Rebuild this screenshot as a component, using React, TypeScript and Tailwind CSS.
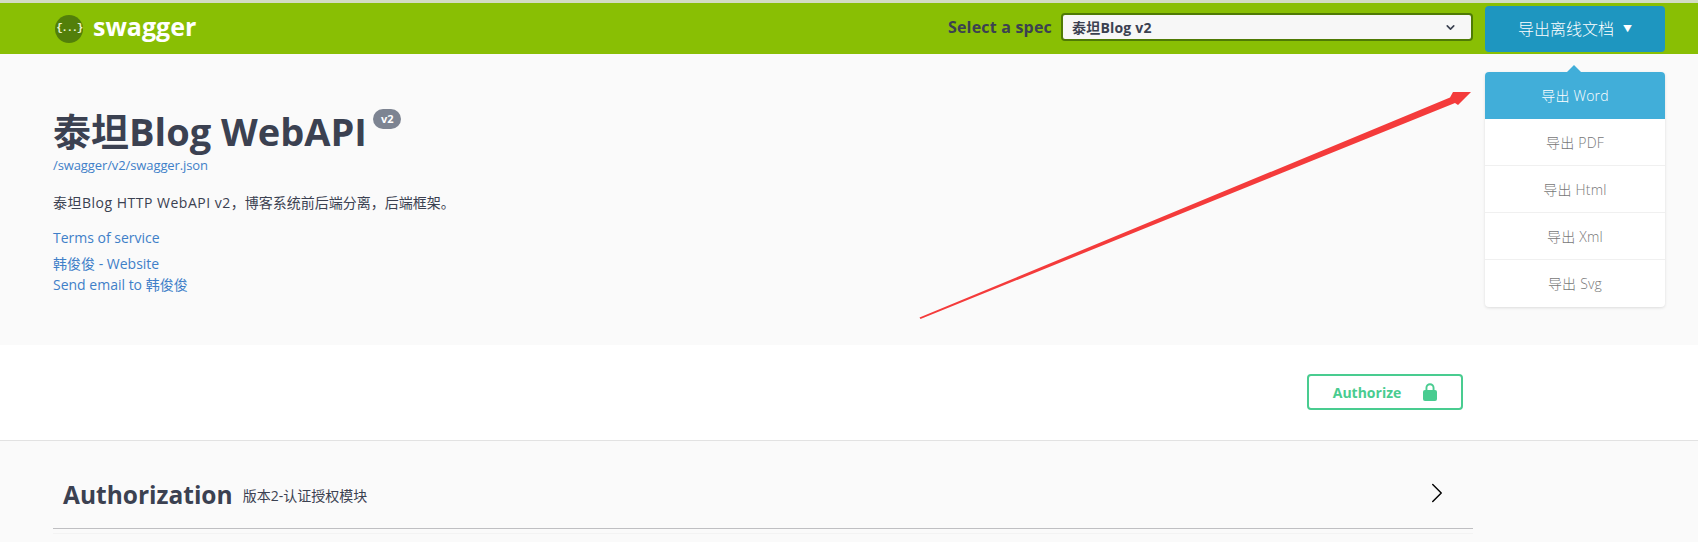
import { ChevronDown, ChevronRight } from 'lucide-react';

const font = "font-['Open_Sans','Noto_Sans_CJK_SC',sans-serif]";
const exportItems = ['导出 PDF', '导出 Html', '导出 Xml', '导出 Svg'];

function SwaggerLogo() {
  return (
    <div className="w-[28px] h-[28px] rounded-full bg-[#527f0a] flex items-center justify-center text-[#e8f3cf] font-['Liberation_Mono',monospace] text-[11px] font-bold tracking-[-1.5px]">
      {'{...}'}
    </div>
  );
}

function Lock() {
  return (
    <svg width="14" height="18" viewBox="0 0 14 18" fill="#49cc90">
      <path d="M2.5 8V4.8a4.5 4.5 0 0 1 9 0V8H9.6V4.8a2.6 2.6 0 0 0-5.2 0V8z" />
      <rect x="0" y="7" width="14" height="11" rx="2" />
    </svg>
  );
}

export default function App() {
  return (
    <div className={`${font} relative h-[542px] w-[1698px] overflow-hidden bg-white text-[#3b4151]`}>
      <div className="h-[3px] bg-[#d3dcc4]" />

      <header className="h-[51px] bg-[#89bf04] flex items-center pl-[55px] pr-[33px]">
        <SwaggerLogo />
        <span className="ml-[10px] text-[25px] font-bold text-white leading-none pb-[5px]">swagger</span>
        <span className="ml-auto -mt-[4px] text-[16px] font-bold text-[#3b4151] tracking-[0.2px]">Select a spec</span>
        <div className="ml-[9px] -mt-[3px] w-[412px] h-[28px] bg-[#f7f7f7] border-2 border-[#4f7a05] rounded-[4px] flex items-center justify-between pl-[9px] pr-[14px] text-[14px] font-bold tracking-[0.2px] text-[#3b4151]">
          <span>泰坦Blog v2</span>
          <ChevronDown size={13} strokeWidth={3} />
        </div>
        <button className="ml-[12px] mt-[1px] w-[180px] h-[46px] bg-[#1e96c0] rounded-[4px] text-white text-[16px] font-light flex items-center justify-center gap-[9px]">
          导出离线文档
          <span className="text-[9px]">▼</span>
        </button>
      </header>

      <section className="h-[291px] bg-[#fafafa] pl-[53px] pt-[54px]">
        <div className="flex items-start">
          <h1 className="text-[38px] leading-[46px] font-bold text-[#3b4151]">泰坦Blog WebAPI</h1>
          <span className="ml-[6px] mt-[1px] h-[20px] px-[8px] rounded-[10px] bg-[#7d8492] text-white text-[11px] font-bold leading-[20px]">v2</span>
        </div>
        <a className="block mt-[2px] text-[13px] leading-[18px] tracking-[-0.1px] text-[#3f7fc8]">/swagger/v2/swagger.json</a>
        <p className="mt-[19px] text-[14px] leading-[20px] text-[#3b4151]">
          <span className="tracking-[0.5px]">泰坦Blog HTTP WebAPI v2</span>，博客系统前后端分离，后端框架。
        </p>
        <a className="block mt-[15px] text-[14px] leading-[20px] text-[#3f7fc8]">Terms of service</a>
        <a className="block mt-[5px] text-[14px] leading-[21px] text-[#3f7fc8]">韩俊俊 - Website</a>
        <a className="block text-[14px] leading-[21px] text-[#3f7fc8]">Send email to 韩俊俊</a>
      </section>

      <section className="h-[96px] border-b border-[#e2e2e2] flex items-start justify-end pr-[235px] pt-[29px]">
        <button className="w-[156px] h-[36px] border-2 border-[#49cc90] rounded-[4px] flex items-center justify-center gap-[22px] text-[14px] font-bold text-[#49cc90]">
          Authorize
          <Lock />
        </button>
      </section>

      <section className="h-[101px] bg-[#fafafa] pl-[53px] pr-[225px]">
        <div className="h-[88px] border-b border-[#bfbfc2] flex items-center pt-[21px] pl-[10px] pr-[19px]">
          <span className="text-[24.5px] font-bold text-[#3b4151]">Authorization</span>
          <span className="ml-[10px] text-[14px] text-[#3b4151]">版本2-认证授权模块</span>
          <ChevronRight className="ml-auto -mt-[4px] text-black" size={34} strokeWidth={1} />
        </div>
        <div className="mt-[4px] h-px bg-[#f3f3f3]" />
      </section>

      {/* export dropdown, over the page */}
      <div className="absolute left-[1485px] top-[72px] w-[180px] rounded-[4px] bg-white shadow-[0_1px_3px_rgba(0,0,0,0.12)] text-[14px] font-light tracking-[0.2px] text-center">
        <div className="absolute left-[82px] -top-[7px] w-0 h-0 border-x-[7px] border-x-transparent border-b-[7px] border-b-[#41aed9]" />
        <div className="h-[47px] leading-[47px] bg-[#41aed9] text-white rounded-t-[4px]">导出 Word</div>
        {exportItems.map(item => (
          <div key={item} className="h-[47px] leading-[47px] text-[#777] border-b border-[#f0f0f0] last:border-b-0">{item}</div>
        ))}
      </div>

      {/* red annotation arrow */}
      <svg className="absolute left-0 top-0 pointer-events-none" width="1698" height="542">
        <polygon points="919.5,317.5 920.5,319 1455,103 1458,105 1471,92 1453,92 1450,97.5" fill="#f43b3b" />
      </svg>
    </div>
  );
}
